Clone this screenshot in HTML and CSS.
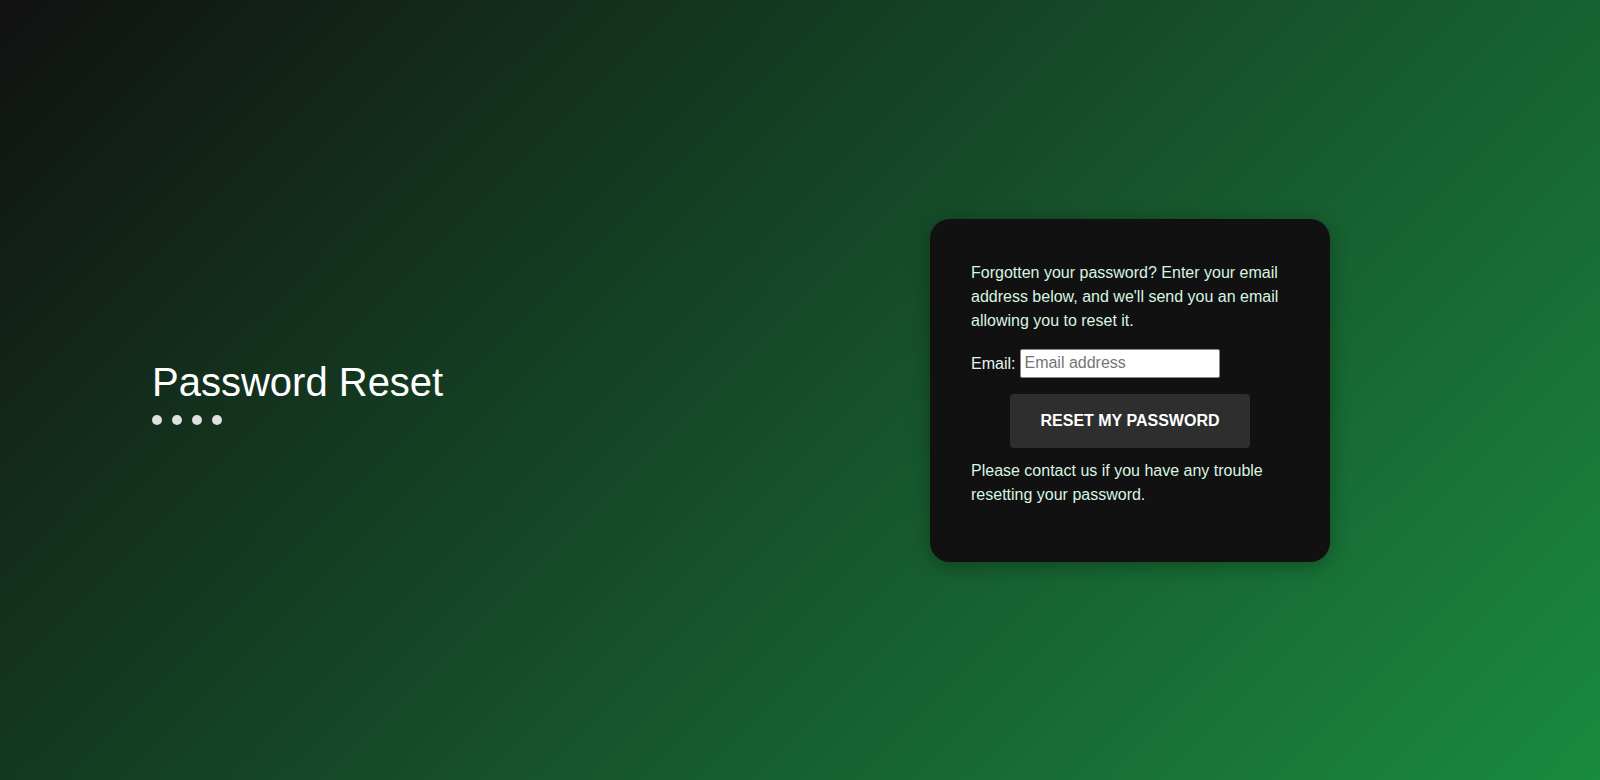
FILE: index.html
```html
<!DOCTYPE html>
<html lang="en">
<head>
<meta charset="utf-8">
<title>Password Reset</title>
<link rel="stylesheet" href="styles.css">
</head>
<body>
<main class="page">
  <section class="intro">
    <h1 class="title">Password Reset</h1>
    <div class="dots"><span></span><span></span><span></span><span></span></div>
  </section>
  <section class="card">
    <p class="text">Forgotten your password? Enter your email address below, and we'll send you an email allowing you to reset it.</p>
    <div class="field">
      <label class="label" for="email">Email:</label>
      <input class="input" id="email" type="email" placeholder="Email address">
    </div>
    <button class="button" type="button">RESET MY PASSWORD</button>
    <p class="text note">Please contact us if you have any trouble resetting your password.</p>
  </section>
</main>
</body>
</html>
```

FILE: styles.css
```css
html, body {
  margin: 0;
  padding: 0;
  height: 100%;
}

body {
  font-family: "Liberation Sans", Arial, sans-serif;
  background: linear-gradient(135deg, #111111 0%, #1a8a40 100%);
  color: #ffffff;
}

.page {
  box-sizing: border-box;
  height: 780px;
  display: flex;
  align-items: center;
  justify-content: space-between;
  padding: 0 270px 0 152px;
}

.intro {
  display: flex;
  flex-direction: column;
  padding-top: 3px;
}

.title {
  margin: 0;
  font-size: 40px;
  font-weight: normal;
  line-height: 46px;
  color: #ffffff;
}

.dots {
  display: flex;
  gap: 10px;
  margin-top: 10px;
}

.dots span {
  width: 10px;
  height: 10px;
  border-radius: 50%;
  background: #e0e0e0;
}

.card {
  box-sizing: border-box;
  width: 400px;
  background: #111111;
  border-radius: 20px;
  padding: 42px 41px 40px 41px;
  box-shadow: 0 4px 20px rgba(0, 0, 0, 0.3);
  display: flex;
  flex-direction: column;
  color: #d8f5e2;
}

.text {
  margin: 0 0 15px 0;
  font-size: 16px;
  line-height: 24px;
}

.field {
  display: flex;
  align-items: center;
  gap: 5px;
  font-size: 16px;
  padding-top: 1px;
}

.label {
  color: #e8f5ec;
  padding-top: 1px;
}

.input {
  box-sizing: border-box;
  width: 200px;
  height: 29px;
  padding: 2px 3px;
  border: 1px solid #8a8a8a;
  border-radius: 2px;
  background: #ffffff;
  font-family: "Liberation Sans", Arial, sans-serif;
  font-size: 16px;
  color: #000;
}

.input::placeholder {
  color: #757575;
}

.button {
  align-self: center;
  margin-top: 16px;
  width: 240px;
  height: 54px;
  border: none;
  border-radius: 4px;
  background: #2e2e2e;
  color: #ffffff;
  font-family: "Liberation Sans", Arial, sans-serif;
  font-size: 16px;
  font-weight: bold;
  cursor: pointer;
}

.note {
  margin: 11px 0 15px 0;
}
```
